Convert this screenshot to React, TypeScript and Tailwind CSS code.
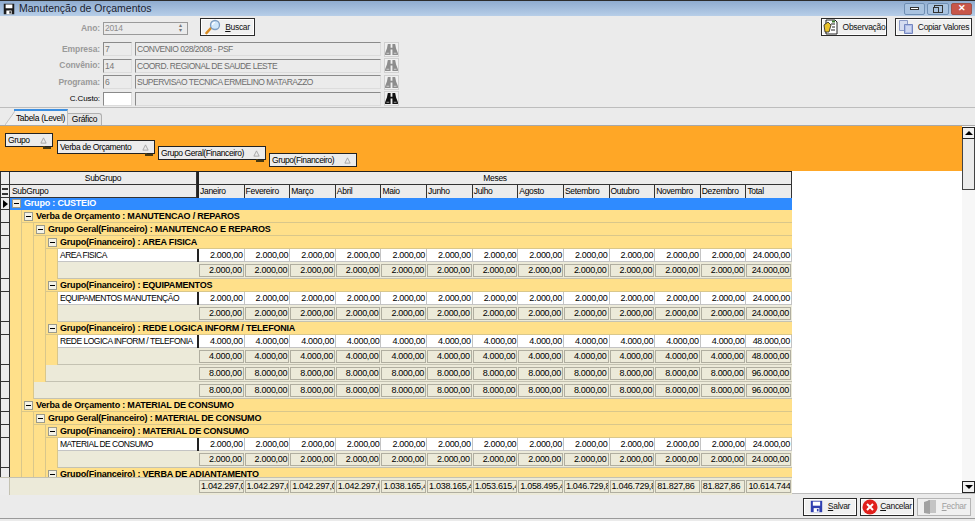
import type { ReactNode } from "react";

const MONTHS = ["Janeiro", "Fevereiro", "Março", "Abril", "Maio", "Junho", "Julho", "Agosto", "Setembro", "Outubro", "Novembro", "Dezembro", "Total"];

function values(v: string, total: string) {
  return [...Array(12).fill(v), total] as string[];
}

const FOOTER = [
  "1.042.297,0", "1.042.297,0", "1.042.297,0", "1.042.297,0", "1.038.165,4", "1.038.165,4", "1.053.615,4",
  "1.058.495,4", "1.046.729,8", "1.046.729,8", "81.827,86", "81.827,86", "10.614.744",
];

function FloppyIcon({ color = "#1c1c1c", className = "" }: { color?: string; className?: string }) {
  return (
    <svg viewBox="0 0 16 16" className={className}>
      <path d="M1 1h14v14H1z" fill={color} />
      <path d="M3.500 2h9v5h-9z" fill="#fff" />
      <path d="M4.500 10h7v5h-7z" fill="#fff" />
      <path d="M8.500 11h2v3h-2z" fill={color} />
    </svg>
  );
}

function Binoculars({ muted }: { muted?: boolean }) {
  const c = muted ? "#8d8d8d" : "#111";
  return (
    <svg viewBox="0 0 14 12" className="h-[11px] w-[13px]">
      <path d="M3 0h3v4h2V0h3l1 5 2 5v2H8V6H6v6H0v-2l2-5z" fill={c} />
      <path d="M1.500 9.500h3v1h-3zM9.500 9.500h3v1h-3z" fill={muted ? "#cfcfcf" : "#9a9a9a"} />
    </svg>
  );
}

function Magnifier() {
  return (
    <svg viewBox="0 0 16 16" className="h-4 w-4 shrink-0">
      <path d="M6 9 1.500 14" stroke="#d98a1f" strokeWidth="2.600" strokeLinecap="round" />
      <circle cx="10" cy="6" r="4.500" fill="#cfe6fa" stroke="#7d9cc0" strokeWidth="1.300" />
      <path d="M7.500 6a2.500 2.500 0 0 1 2.500-2.500" stroke="#fff" strokeWidth="1.200" fill="none" />
    </svg>
  );
}

function NoteIcon() {
  return (
    <svg viewBox="0 0 16 16" className="h-4 w-4 shrink-0">
      <path d="M3 1h9l2 2v12H3z" fill="#fff" stroke="#222" />
      <path d="M1 6l4-3 3 3-2 7H2z" fill="#e9c22c" stroke="#222" strokeWidth=".8" />
      <path d="M8 5h4M9 8h3M8 11h4" stroke="#222" />
      <path d="M9 1.500h3v2H9z" fill="#3a7d2c" />
    </svg>
  );
}

function CopyIcon() {
  return (
    <svg viewBox="0 0 16 16" className="h-4 w-4 shrink-0">
      <path d="M1.500 1.500h8v10h-8z" fill="#d5dcf0" stroke="#8c9bc8" />
      <path d="M6.500 5.500h8v9h-8z" fill="#aebce6" stroke="#7486bf" />
      <path d="M8 8h5M8 10h5M8 12h5" stroke="#eef1fb" />
    </svg>
  );
}

function CancelIcon() {
  return (
    <svg viewBox="0 0 16 16" className="h-4 w-4 shrink-0">
      <circle cx="8" cy="8" r="7.500" fill="#e0201c" />
      <path d="M5 5l6 6M11 5l-6 6" stroke="#fff" strokeWidth="2" />
    </svg>
  );
}

function DoorIcon() {
  return (
    <svg viewBox="0 0 16 16" className="h-4 w-4 shrink-0">
      <path d="M6 1h8v13H6z" fill="#c4c4c4" />
      <path d="M2 3l6-2v14l-6-1z" fill="#a2a2a2" />
    </svg>
  );
}

function Minus() {
  return (
    <div className="flex h-[9px] w-[9px] shrink-0 items-center justify-center border border-[#9b9b8c] bg-[#f4f2e6]">
      <div className="h-px w-[5px] bg-black" />
    </div>
  );
}

function WinButton({ children, className }: { children: ReactNode; className: string }) {
  return <div className={`flex h-[12px] items-center justify-center rounded-[2px] border border-[#6f8fb4] ${className}`}>{children}</div>;
}

function Button({ children, icon, className = "", disabled }: { children: ReactNode; icon: ReactNode; className?: string; disabled?: boolean }) {
  return (
    <div
      className={`flex h-[18px] items-center justify-center gap-1 whitespace-nowrap border bg-[#f0f0f0] ${
        disabled ? "border-[#b5b5b5] text-[#a0a0a0]" : "border-[#2a2a2a] text-[#111] shadow-[inset_0_0_0_1px_#fff]"
      } ${className}`}
    >
      {icon}
      <span>{children}</span>
    </div>
  );
}

function FormRow({ label, code, name, muted }: { label: string; code: string; name: string; muted?: boolean }) {
  const box = "h-[14px] border border-[#8a8a8a] border-r-[#dcdcdc] border-b-[#dcdcdc] px-[1px] leading-[12px]";
  return (
    <div className="flex h-[14px] items-center">
      <span className={`w-[101px] pr-[1px] text-right ${muted ? "font-bold tracking-[-0.1px] text-[#9a9a9a]" : "text-[8px] tracking-[-0.1px] text-black"}`}>{label}</span>
      <div className={`ml-[2px] w-[29px] ${box} ${muted ? "bg-[#ebebeb] text-[#777]" : "bg-white"}`}>{code}</div>
      <div className={`ml-[3px] w-[246px] ${box} bg-[#ebebeb] tracking-[-0.5px] text-[#6d6d6d]`}>{name}</div>
      <div className="ml-[3px] flex h-[15px] w-[15px] items-center justify-center border border-[#d0d0d0] bg-[#f0f0f0]">
        <Binoculars muted={muted} />
      </div>
    </div>
  );
}

function Chip({ label, width, top, link }: { label: string; width: string; top: string; link?: boolean }) {
  return (
    <div className={`relative flex h-[14px] items-center justify-between border border-[#222] bg-[#ececec] pl-[2px] pr-[5px] tracking-[-0.4px] ${width} ${top}`}>
      <span className="whitespace-nowrap">{label}</span>
      <svg viewBox="0 0 8 8" className="h-[7px] w-[7px] shrink-0">
        <path d="M4 1 7 7H1z" fill="none" stroke="#a0a0a0" />
      </svg>
      {link && <div className="absolute right-[1px] top-full h-[3px] w-[8px] border-b-2 border-l-2 border-[#4a3a10]" />}
    </div>
  );
}

function Indicator({ line = true, children }: { line?: boolean; children?: ReactNode }) {
  return (
    <div className={`flex w-[10px] shrink-0 items-center justify-center border-x border-[#333] bg-[#ececec] ${line ? "border-b" : ""}`}>
      {children}
    </div>
  );
}

function Indents({ n }: { n: number }) {
  return (
    <>
      {Array.from({ length: n }, (_, i) => (
        <div key={i} className="w-[12px] shrink-0 border-r border-[#d9c78b] bg-[#ffe08a]" />
      ))}
    </>
  );
}

function GroupRow({ level, text, blue, height = "h-[13px]" }: { level: number; text: string; blue?: boolean; height?: string }) {
  return (
    <div className={`flex shrink-0 ${height}`}>
      <Indicator>
        {blue && (
          <svg viewBox="0 0 6 8" className="h-2 w-[6px]">
            <path d="M1 0l5 4-5 4z" fill="#000" />
          </svg>
        )}
      </Indicator>
      <Indents n={level} />
      <div
        className={`flex flex-1 items-center gap-[3px] border-b pl-[2px] text-[9px] font-bold tracking-[-0.2px] ${
          blue ? "border-[#2f8bff] bg-[#2f8bff] text-white" : "border-[#d9c78b] bg-[#ffe08a] pt-[1px] text-black"
        }`}
      >
        <Minus />
        <span className="whitespace-nowrap">{text}</span>
      </div>
    </div>
  );
}

function DataRow({ text, vals }: { text: string; vals: string[] }) {
  return (
    <div className="flex h-[13px] shrink-0">
      <Indicator line={false} />
      <Indents n={4} />
      <div className="flex-1 overflow-hidden whitespace-nowrap border-b border-[#c4c4c4] bg-white pl-[2px] leading-[12px] tracking-[-0.5px]">{text}</div>
      <div className="w-[2px] shrink-0 bg-[#222]" />
      <div className="grid w-[593px] shrink-0 grid-cols-13 text-[9px]">
        {vals.map((v, i) => (
          <div key={i} className="border-r border-b border-[#c4c4c4] bg-white pr-[1px] text-right leading-[12px]">
            {v}
          </div>
        ))}
      </div>
    </div>
  );
}

function SumRow({ level, vals }: { level: number; vals: string[] }) {
  return (
    <div className="flex h-[17px] shrink-0">
      <Indicator />
      <Indents n={level} />
      <div className="flex-1 border-b border-[#c4c2b2] bg-[#ecead9]" />
      <div className="grid w-[595px] shrink-0 grid-cols-13 border-b border-[#c4c2b2] bg-[#ecead9] pl-[2px] text-[9px]">
        {vals.map((v, i) => (
          <div key={i} className="py-[2px] pr-[1px]">
            <div className="h-[13px] overflow-hidden whitespace-nowrap border border-[#b0aea0] px-[1px] text-right leading-[11px]">{v}</div>
          </div>
        ))}
      </div>
    </div>
  );
}

function Block({ text, v, total, first }: { text: string; v: string; total: string; first?: string }) {
  const vals = values(v, total);
  return (
    <>
      <GroupRow level={3} text={`Grupo(Financeiro) : ${first ?? text}`} />
      <DataRow text={text} vals={vals} />
      <SumRow level={4} vals={vals} />
    </>
  );
}

export default function App() {
  const two = values("2.000,00", "24.000,00");
  const eight = values("8.000,00", "96.000,00");
  return (
    <div className="flex h-[521px] w-[975px] flex-col overflow-hidden bg-[#ebebeb] font-['Liberation_Sans',sans-serif] text-[8.500px] tracking-[-0.3px] text-black">
      {/* Title bar */}
      <div className="flex h-[16px] shrink-0 items-center border-t border-[#2c2c2c] bg-gradient-to-b from-[#8facd0] to-[#b7cee8] pl-[3px] pr-[3px]">
        <FloppyIcon className="h-[12px] w-[12px]" />
        <span className="ml-[4px] text-[10.500px] tracking-normal text-[#1a2230]">Manutenção de Orçamentos</span>
        <div className="ml-auto flex gap-[2px]">
          <WinButton className="w-[21px] bg-[#a9c3e0]">
            <div className="h-[3px] w-[9px] border border-[#333] bg-white" />
          </WinButton>
          <WinButton className="w-[22px] bg-[#a9c3e0]">
            <div className="relative h-[8px] w-[9px] border border-[#333]">
              <div className="absolute -left-[2px] top-[1px] h-[6px] w-[6px] border border-[#333] bg-[#a9c3e0]" />
            </div>
          </WinButton>
          <WinButton className="w-[21px] border-[#a0524a] bg-[#c8564a] text-[9px] font-bold text-white">✕</WinButton>
        </div>
      </div>

      {/* Filters */}
      <div className="flex h-[92px] shrink-0 flex-col border-b border-[#bdbdbd] pt-[2px]">
        <div className="flex h-[18px] items-center">
          <span className="mt-[2px] w-[101px] pr-[1px] text-right font-bold tracking-[-0.1px] text-[#9a9a9a]">Ano:</span>
          <div className="ml-[2px] mt-[2px] flex h-[13px] w-[85px] items-center justify-between border border-[#9a9a9a] bg-[#ebebeb] pl-[1px] pr-[5px] text-[#8d8d8d]">
            <span>2014</span>
            <span className="text-[6px] leading-[5px] text-[#777]">
              ▴
              <br />▾
            </span>
          </div>
          <Button icon={<Magnifier />} className="ml-[12px] w-[55px]">
            <span className="underline">B</span>uscar
          </Button>
          <Button icon={<NoteIcon />} className="ml-[566px] w-[66px]">
            Observação
          </Button>
          <Button icon={<CopyIcon />} className="ml-[8px] w-[77px]">
            Copiar Valores
          </Button>
        </div>
        <div className="mt-[6px] flex flex-col gap-[2.500px]">
          <FormRow label="Empresa:" code="7" name="CONVENIO 028/2008 - PSF" muted />
          <FormRow label="Convênio:" code="14" name="COORD. REGIONAL DE SAUDE LESTE" muted />
          <FormRow label="Programa:" code="6" name="SUPERVISAO TECNICA ERMELINO MATARAZZO" muted />
          <FormRow label="C.Custo:" code="" name="" />
        </div>
      </div>

      {/* Tabs */}
      <div className="flex h-[18px] shrink-0 items-end whitespace-nowrap border-b border-[#a8a8a8] pl-[14px]">
        <div className="relative flex h-[16px] w-[54px] items-center justify-center border-r border-t-2 border-[#c0c0c0] border-t-[#3d8fe0] bg-[#f0f0f0]">
          <svg viewBox="0 0 10 14" className="absolute bottom-0 -left-[9px] h-[14px] w-[10px]">
            <path d="M0 14 10 0v14z" fill="#f0f0f0" />
            <path d="M0 14 10 0" stroke="#c0c0c0" />
          </svg>
          Tabela (Level)
        </div>
        <div className="flex h-[12px] w-[34px] items-center justify-center rounded-tr-[3px] border-t border-r border-[#b0b0b0] bg-[#e4e4e4]">Gráfico</div>
      </div>

      {/* Pivot panel */}
      <div className="flex h-[368px] shrink-0 border-b border-[#bdbdbd]">
        <div className="flex min-w-0 flex-1 flex-col bg-white">
          <div className="flex h-[45px] shrink-0 items-start bg-[#ffa726] pl-[5px]">
            <Chip label="Grupo" width="w-[48px]" top="mt-[7px]" link />
            <Chip label="Verba de Orçamento" width="ml-[4px] w-[98px]" top="mt-[14px]" link />
            <Chip label="Grupo Geral(Financeiro)" width="ml-[3px] w-[108px]" top="mt-[20px]" link />
            <Chip label="Grupo(Financeiro)" width="ml-[3px] w-[88px]" top="mt-[27px]" />
          </div>

          {/* Grid */}
          <div className="flex min-h-0 w-[792px] flex-1 flex-col">
            <div className="flex h-[14px] shrink-0 border-t border-[#222]">
              <Indicator />
              <div className="flex w-[187px] shrink-0 items-center justify-center border-r border-b border-[#333] bg-[#ececec]">SubGrupo</div>
              <div className="w-[2px] shrink-0 bg-[#222]" />
              <div className="flex flex-1 items-center justify-center border-r border-b border-[#333] bg-[#ececec]">Meses</div>
            </div>
            <div className="flex h-[13px] shrink-0">
              <Indicator>
                <div className="h-[7px] w-[6px] border-y-2 border-double border-[#333]" />
              </Indicator>
              <div className="flex w-[187px] shrink-0 items-center border-r border-b border-[#333] bg-[#ececec] pl-[2px]">SubGrupo</div>
              <div className="w-[2px] shrink-0 bg-[#222]" />
              <div className="grid w-[593px] shrink-0 grid-cols-13">
                {MONTHS.map((m) => (
                  <div key={m} className="flex items-center whitespace-nowrap border-r border-b border-[#333] bg-[#ececec] pl-[1px]">
                    {m}
                  </div>
                ))}
              </div>
            </div>

            <div className="flex h-[279px] shrink-0 flex-col overflow-hidden">
              <GroupRow level={0} text="Grupo : CUSTEIO" blue height="h-[12px]" />
              <GroupRow level={1} text="Verba de Orçamento : MANUTENCAO / REPAROS" />
              <GroupRow level={2} text="Grupo Geral(Financeiro) : MANUTENCAO E REPAROS" />
              <Block text="AREA FISICA" v="2.000,00" total="24.000,00" />
              <Block text="EQUIPAMENTOS MANUTENÇÃO" first="EQUIPAMENTOS" v="2.000,00" total="24.000,00" />
              <Block text="REDE LOGICA INFORM / TELEFONIA" v="4.000,00" total="48.000,00" />
              <SumRow level={3} vals={eight} />
              <SumRow level={2} vals={eight} />
              <GroupRow level={1} text="Verba de Orçamento : MATERIAL DE CONSUMO" />
              <GroupRow level={2} text="Grupo Geral(Financeiro) : MATERIAL DE CONSUMO" />
              <GroupRow level={3} text="Grupo(Financeiro) : MATERIAL DE CONSUMO" />
              <DataRow text="MATERIAL DE CONSUMO" vals={two} />
              <SumRow level={4} vals={two} />
              <GroupRow level={3} text="Grupo(Financeiro) : VERBA DE ADIANTAMENTO" />
            </div>

            <div className="flex h-[18px] shrink-0 border-t border-[#c4c2b2]">
              <div className="w-[10px] shrink-0 border-r border-[#c4c2b2] bg-[#ececec]" />
              <div className="flex-1 bg-[#ecead9]" />
              <div className="grid w-[595px] shrink-0 grid-cols-13 bg-[#ecead9] pl-[2px] text-[9px]">
                {FOOTER.map((v, i) => (
                  <div key={i} className="py-[2px] pr-[1px]">
                    <div className="h-[13px] overflow-hidden whitespace-nowrap border border-[#b0aea0] px-[1px] leading-[11px]">{v}</div>
                  </div>
                ))}
              </div>
            </div>
          </div>
        </div>

        {/* Scrollbar */}
        <div className="flex w-[13px] shrink-0 flex-col bg-[#f7f7f7] pt-[1px]">
          <div className="flex h-[12px] items-center justify-center border border-[#222] bg-[#f0f0f0]">
            <div className="h-0 w-0 border-x-[4px] border-b-[4px] border-x-transparent border-b-black" />
          </div>
          <div className="h-[51px] border border-t-0 border-[#444] bg-[#ebebeb]" />
          <div className="mt-auto flex h-[12px] items-center justify-center border border-[#222] bg-[#f0f0f0]">
            <div className="h-0 w-0 border-x-[4px] border-t-[4px] border-x-transparent border-t-black" />
          </div>
        </div>
      </div>

      {/* Actions */}
      <div className="flex h-[25px] shrink-0 items-center justify-end gap-[3px] border-b border-[#9a9a9a] pr-[4px] pt-[1px]">
        <Button icon={<FloppyIcon color="#2f3fb0" className="h-[13px] w-[13px] shrink-0" />} className="w-[54px] gap-[5px]">
          <span className="underline">S</span>alvar
        </Button>
        <Button icon={<CancelIcon />} className="w-[54px] gap-[2px]">
          <span className="underline">C</span>ancelar
        </Button>
        <Button icon={<DoorIcon />} className="w-[54px]" disabled>
          <span className="underline">F</span>echar
        </Button>
      </div>
    </div>
  );
}
